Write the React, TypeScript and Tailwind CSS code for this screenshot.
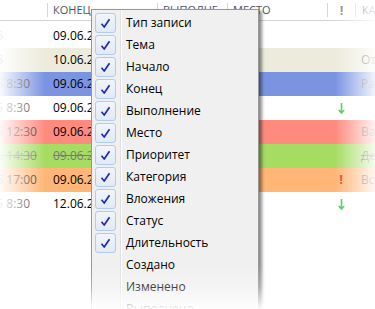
import { Fragment } from 'react'

type Row = {
  start: string
  end: string
  bg: string
  flag?: 'down' | 'high'
  cat?: string
  done?: boolean
}

const rows: Row[] = [
  { start: '09.06.2015', end: '09.06.2015', bg: 'bg-white' },
  { start: '10.06.2015', end: '10.06.2015', bg: 'bg-[#ecebdc]', cat: 'Отпуск' },
  { start: '09.06.2015 8:30', end: '09.06.2015', bg: 'bg-[#7b94e2]', cat: 'Работа' },
  { start: '09.06.2015 8:30', end: '09.06.2015', bg: 'bg-white', flag: 'down' },
  { start: '09.06.2015 12:30', end: '09.06.2015', bg: 'bg-[#ff8b7f]', cat: 'Важно' },
  { start: '09.06.2015 14:30', end: '09.06.2015', bg: 'bg-[#a7dc63]', cat: 'Дела', done: true },
  { start: '09.06.2015 17:00', end: '09.06.2015', bg: 'bg-[#ffb676]', flag: 'high', cat: 'Встреча' },
  { start: '12.06.2015 8:30', end: '12.06.2015', bg: 'bg-white', flag: 'down' },
]

const items: { label: string; checked: boolean }[] = [
  { label: 'Тип записи', checked: true },
  { label: 'Тема', checked: true },
  { label: 'Начало', checked: true },
  { label: 'Конец', checked: true },
  { label: 'Выполнение', checked: true },
  { label: 'Место', checked: true },
  { label: 'Приоритет', checked: true },
  { label: 'Категория', checked: true },
  { label: 'Вложения', checked: true },
  { label: 'Статус', checked: true },
  { label: 'Длительность', checked: true },
  { label: 'Создано', checked: false },
  { label: 'Изменено', checked: false },
  { label: 'Выполнено', checked: false },
]

function Sep() {
  return <div className="h-[14px] w-px shrink-0 bg-[#d6d6d6]" />
}

function DownArrow() {
  return (
    <svg width="7" height="11" viewBox="0 0 7 11">
      <path d="M3.5 0 V9.5 M0.8 7 L3.5 10 L6.2 7" stroke="#46c446" strokeWidth="1.6" fill="none" />
    </svg>
  )
}

function Check() {
  return (
    <svg width="11" height="11" viewBox="0 0 11 11">
      <path d="M1.5 5.8 L4.2 9 L9.5 1.2" stroke="#1f2bb0" strokeWidth="1.7" fill="none" strokeLinejoin="round" />
    </svg>
  )
}

export default function App() {
  return (
    <div className="relative h-[309px] w-[375px] overflow-hidden bg-white font-['Open_Sans','Noto_Sans',sans-serif] text-[12px] text-black">
      {/* header */}
      <div className="flex h-[21px] items-center overflow-hidden border-b border-[#d4d4d4] text-[11px] uppercase text-[#4b5563]">
        <div className="w-[47px] shrink-0" />
        <Sep />
        <div className="w-[109px] shrink-0 pl-[5px]">Конец</div>
        <Sep />
        <div className="w-[69px] shrink-0 overflow-hidden whitespace-nowrap pl-[5px]">Выполне</div>
        <Sep />
        <div className="w-[99px] shrink-0 pl-[5px]">Место</div>
        <Sep />
        <div className="w-[27px] shrink-0 text-center text-[13px] font-bold leading-none text-[#8a8a8a]">!</div>
        <Sep />
        <div className="shrink-0 whitespace-nowrap pl-[6px]">Категория</div>
      </div>
      <div className="h-[3px]" />

      {/* rows */}
      {rows.map((r, i) => (
        <div key={i} className={`flex h-[24px] items-center overflow-hidden ${r.bg}`}>
          <div className="w-[47px] shrink-0 overflow-hidden whitespace-nowrap">
            <span className={`ml-[-58px] ${r.done ? 'text-[#7a7a7a] line-through' : 'text-[#333]'}`}>{r.start}</span>
          </div>
          <div className="w-[110px] shrink-0 whitespace-nowrap pl-[6px]">
            <span className={r.done ? 'text-[#7a7a7a] line-through' : ''}>{r.end}</span>
          </div>
          <div className="w-[70px] shrink-0" />
          <div className="w-[100px] shrink-0" />
          <div className="flex w-[28px] shrink-0 justify-center">
            {r.flag === 'down' && <DownArrow />}
            {r.flag === 'high' && <span className="text-[13px] font-bold text-[#e23a2a]">!</span>}
          </div>
          <div className="shrink-0 whitespace-nowrap pl-[6px] text-[#555]">
            <span className={r.done ? 'line-through' : ''}>{r.cat}</span>
          </div>
        </div>
      ))}

      {/* context menu */}
      <div className="absolute left-[91px] top-[9px] h-[320px] w-[168px] border border-[#979797] bg-[#f0f0f0] pt-[2px] shadow-[3px_2px_3px_rgba(0,0,0,0.45)]">
        <div className="absolute bottom-0 left-[28px] top-0 w-px bg-[#e0e0e0]" />
        <div className="absolute bottom-0 left-[29px] top-0 w-px bg-white" />
        {items.map((it) => (
          <Fragment key={it.label}>
            <div className="relative flex h-[22px] items-center">
              <div className="ml-[3px] flex h-[21px] w-[21px] items-center justify-center">
                {it.checked && (
                  <div className="flex h-[20px] w-[21px] items-center justify-center rounded-[3px] border border-[#aecbf0] bg-gradient-to-b from-[#f1f5fc] to-[#e2eaf7]">
                    <Check />
                  </div>
                )}
              </div>
              <span className="pl-[10px] text-[12px] text-black">{it.label}</span>
            </div>
          </Fragment>
        ))}
      </div>

      {/* fades */}
      <div className="pointer-events-none absolute bottom-0 left-0 top-[21px] w-[45px] bg-gradient-to-r from-white/95 to-white/0" />
      <div className="pointer-events-none absolute bottom-0 right-0 top-0 w-[40px] bg-gradient-to-l from-white/90 to-white/0" />
      <div className="pointer-events-none absolute bottom-0 left-0 right-0 h-[44px] bg-[linear-gradient(to_top,rgba(255,255,255,0.95)_0%,rgba(255,255,255,0.25)_50%,rgba(255,255,255,0)_100%)]" />
    </div>
  )
}
